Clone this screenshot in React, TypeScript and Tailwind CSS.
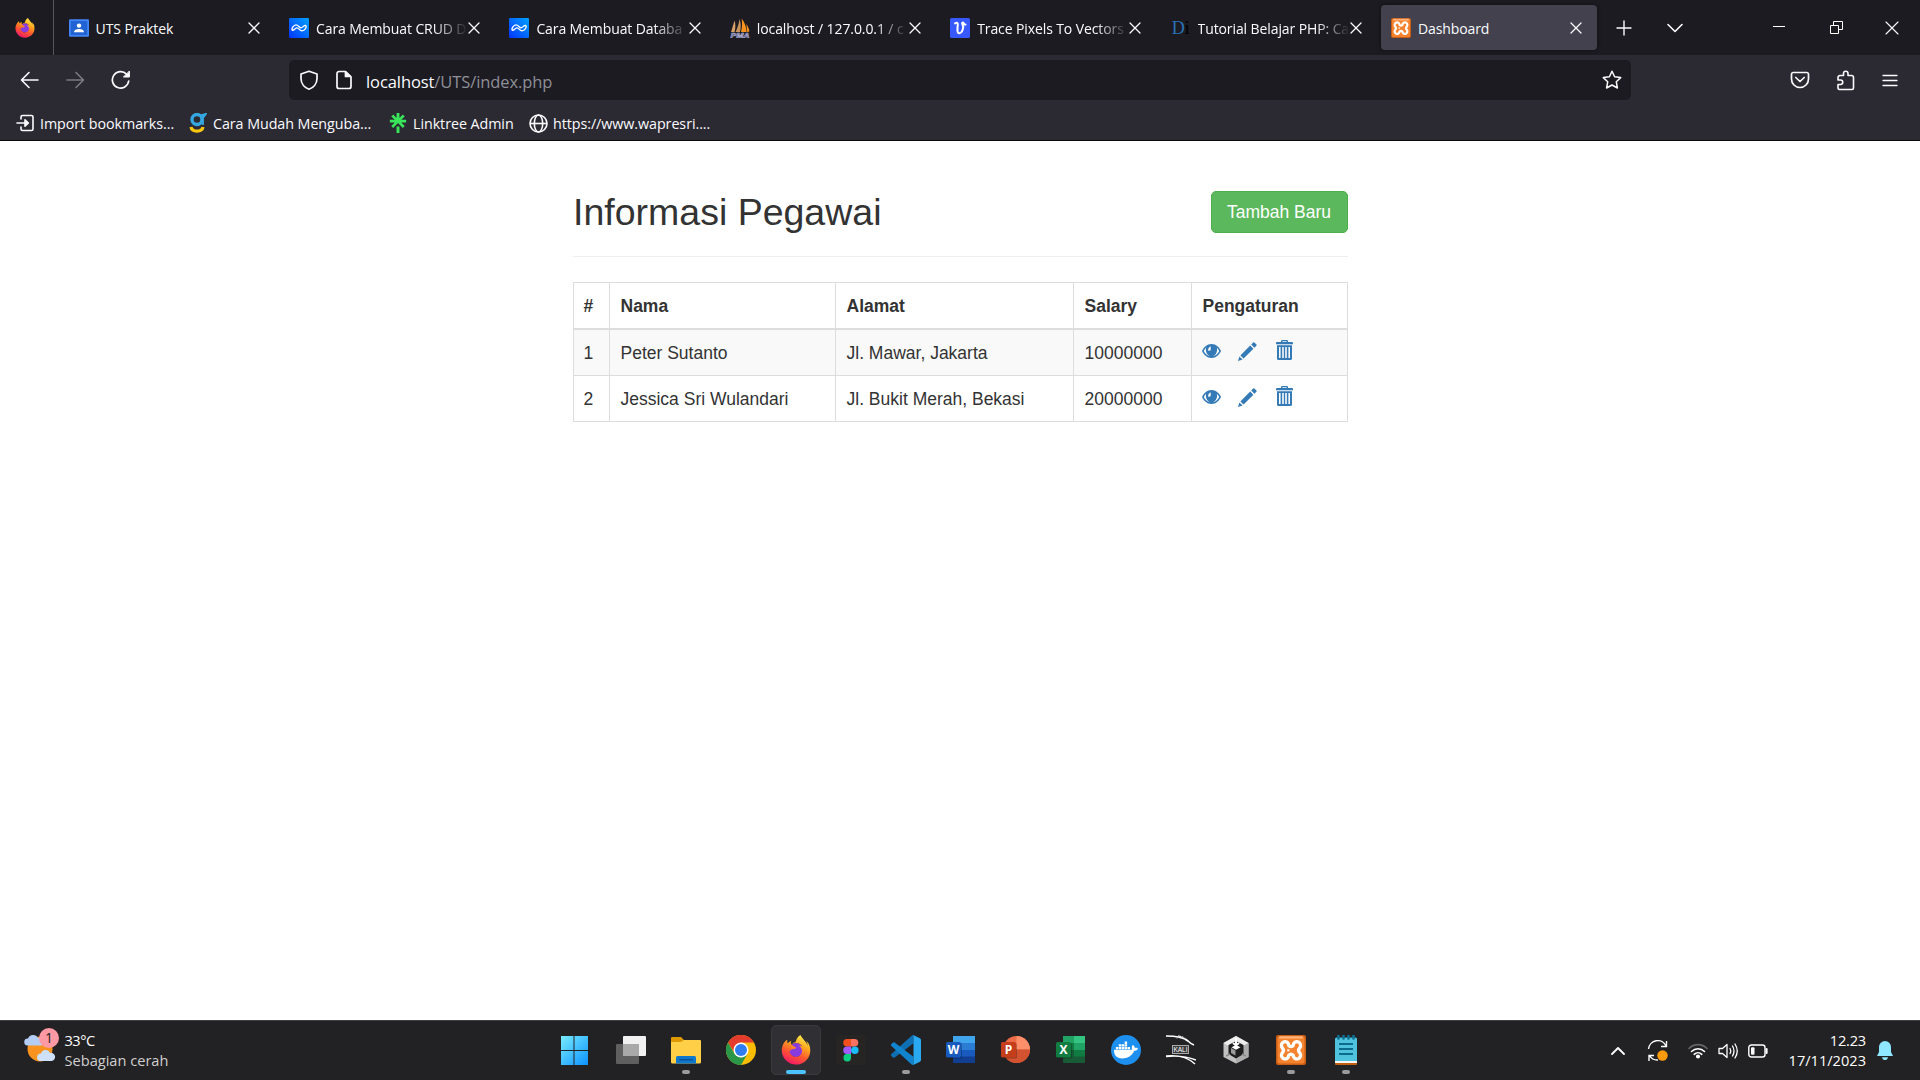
import React from "react";
import { FaDocker, FaFirefoxBrowser } from "react-icons/fa";
import { SiLinktree } from "react-icons/si";

function Firefox({ size, id }: { size: number; id: string }) {
  return (
    <span className="relative block shrink-0" style={{ width: size, height: size }}>
      <svg viewBox="0 0 30 30" className="absolute inset-0 h-full w-full">
        <defs>
          <linearGradient id={id} x1="0.75" y1="0" x2="0.3" y2="1">
            <stop offset="0" stopColor="#fff44f" />
            <stop offset="0.35" stopColor="#ffa51e" />
            <stop offset="0.65" stopColor="#ff5630" />
            <stop offset="1" stopColor="#f5156c" />
          </linearGradient>
        </defs>
        <circle cx="15" cy="15" r="7" fill="#8a3be0" />
      </svg>
      <FaFirefoxBrowser size={size} fill={`url(#${id})`} className="absolute inset-0" />
    </span>
  );
}

function Xampp({ size }: { size: number }) {
  return (
    <span
      className="flex shrink-0 items-center justify-center rounded-[2px] bg-[#c95d14]"
      style={{ width: size, height: size }}
    >
      <svg viewBox="0 0 30 30" width={size} height={size}>
        <rect x="1.5" y="1.5" width="27" height="27" rx="2" fill="#f5822d" />
        <rect x="3" y="1.2" width="24" height="2.4" rx="1" fill="#ffb27a" />
        <path
          d="M12.8 10.500A3.700 3.700 0 1 0 6.300 12.800Q8.800 15.300 6.300 17.800A3.700 3.700 0 1 0 12.800 20.300Q15 18.200 17.200 20.300A3.700 3.700 0 1 0 23.700 17.800Q21.200 15.300 23.700 12.800A3.700 3.700 0 1 0 17.200 10.500Q15 12.600 12.800 10.500Z"
          fill="none"
          stroke="#fff"
          strokeWidth="3.300"
          strokeLinejoin="round"
        />
        <path d="M11.200 15.300H13.500" stroke="#fff" strokeWidth="2" />
      </svg>
    </span>
  );
}

function WaveFav({ id }: { id: string }) {
  return (
    <svg viewBox="0 0 20 20" className="h-5 w-5">
      <defs>
        <linearGradient id={id} x1="1" y1="0" x2="0" y2="1">
          <stop offset="0" stopColor="#00a2ff" />
          <stop offset="1" stopColor="#0434ff" />
        </linearGradient>
      </defs>
      <rect width="20" height="20" rx="1" fill={`url(#${id})`} />
      <path
        d="M3.600 12.400C1.800 11 4.600 6.800 7 6.800C9.400 6.800 10.200 9.800 12 9.800C13.800 9.800 14.400 7.400 16.400 7.400C18.600 8.800 15.600 12.800 13 12.800C10.600 12.800 9.800 9.800 8 9.800C6.200 9.800 5.600 12.400 3.600 12.400Z"
        fill="none"
        stroke="#fff"
        strokeWidth="1.300"
        strokeLinejoin="round"
      />
    </svg>
  );
}

const favs: Record<string, React.ReactNode> = {
  classroom: (
    <svg viewBox="0 0 20 20" className="h-5 w-5">
      <rect y="1.3" width="20" height="17.4" rx="1.2" fill="#4285f4" />
      <rect x="1.8" y="3" width="16.4" height="14" fill="#2263d4" />
      <circle cx="10" cy="7.6" r="2.2" fill="#fff" />
      <path d="M5 14.2C5 11.6 8 10.9 10 10.9S15 11.6 15 14.2Z" fill="#fff" />
    </svg>
  ),
  wave1: <WaveFav id="wave-a" />,
  wave2: <WaveFav id="wave-b" />,
  pma: (
    <svg viewBox="0 0 20 20" className="h-5 w-5">
      <path d="M1 14C2.4 10 3.4 6 4.6 2.6C5.6 6 5.6 10 4.6 14Z" fill="#d9a066" />
      <path d="M5.6 14C7.8 9 9 5 9.6 1C11 5 11.2 10 10 14Z" fill="#c9955c" />
      <path d="M11 14C12.4 9 12.2 4 11.6 .6C14.4 4 16.4 9 16.6 14Z" fill="#f7941d" />
      <path d="M17 14C17 11 16.6 8 16.2 6C18 8.400 19.200 11 19.4 13.400Z" fill="#f7941d" />
      <text x="0.500" y="19.500" fontSize="7" fontWeight="700" fontStyle="italic" textLength="19" lengthAdjust="spacingAndGlyphs" fill="#3d3f7d" stroke="#b9bad8" strokeWidth=".5" fontFamily="Liberation Sans, sans-serif">PMA</text>
    </svg>
  ),
  vector: (
    <svg viewBox="0 0 20 20" className="h-5 w-5">
      <rect width="20" height="20" rx="1.5" fill="#3859ff" />
      <path
        d="M5 5.400C7 4.400 8 4.600 7.800 6.800C7.400 10 6.800 15.200 9.200 15.200C12.400 15.200 14.200 9 12.400 6.400C11.400 4.800 12.800 4 13.600 5C14.200 6 14 7 15.600 6.600"
        fill="none"
        stroke="#fff"
        strokeWidth="2"
        strokeLinecap="round"
      />
    </svg>
  ),
  di: (
    <span className="block w-5 text-center font-['Liberation_Serif',serif] text-[18px] leading-5 text-[#2a72b8]">
      D<span className="text-black">i</span>
    </span>
  ),
  xampp: <Xampp size={20} />,
};

const tabs = [
  { fav: "classroom", title: "UTS Praktek" },
  { fav: "wave1", title: "Cara Membuat CRUD D" },
  { fav: "wave2", title: "Cara Membuat Databa" },
  { fav: "pma", title: "localhost / 127.0.0.1 / c" },
  { fav: "vector", title: "Trace Pixels To Vectors" },
  { fav: "di", title: "Tutorial Belajar PHP: Ca" },
  { fav: "xampp", title: "Dashboard", active: true },
];

function Line({ d, w, h, sw = 1.4, className = "" }: { d: string; w: number; h: number; sw?: number; className?: string }) {
  return (
    <svg width={w} height={h} viewBox={`0 0 ${w} ${h}`} className={`block shrink-0 ${className}`} fill="none" stroke="currentColor" strokeWidth={sw} strokeLinecap="round" strokeLinejoin="round">
      <path d={d} />
    </svg>
  );
}

const X10 = "M1 1L11 11M11 1L1 11";

function TabBar() {
  return (
    <div className="flex h-[55px] bg-[#1c1b22]">
      <div className="flex w-[54px] shrink-0 items-center border-r border-[#57565e] pl-[15px]">
        <Firefox size={20} id="ff-small" />
      </div>
      <div className="flex w-[1546px] shrink-0 pl-[2.6px]">
        {tabs.map((t) => (
          <div key={t.title} className="h-full w-[220.4px] shrink-0 px-[2px] pt-[5px]">
            <div
              className={
                t.active
                  ? "flex h-[45px] items-center rounded-[4px] bg-[#42414d] px-[10px] shadow-[0_0_4px_rgba(0,0,0,0.5)]"
                  : "flex h-[45px] items-center px-[10px]"
              }
            >
              <span className="shrink-0">{favs[t.fav]}</span>
              <span
                className={
                  t.title.length > 12
                    ? "mt-[2px] ml-[7px] w-[150px] shrink-0 whitespace-nowrap [mask-image:linear-gradient(to_right,#000_118px,transparent_152px)]"
                    : "mt-[2px] ml-[7px] w-[150px] shrink-0 whitespace-nowrap"
                }
              >
                {t.title}
              </span>
              <Line d={X10} w={12} h={12} sw={1.3} className="ml-[2.300px]" />
            </div>
          </div>
        ))}
      </div>
      <div className="flex grow items-center">
        <Line d="M8 1V15M1 8H15" w={16} h={16} className="ml-[15.500px]" />
        <Line d="M1 1.500L8 8.500L15 1.500" w={16} h={10} sw={1.6} className="ml-[35px]" />
        <span className="mt-[-2px] ml-[90px] h-px w-3 bg-white" />
        <svg width="13" height="13" className="ml-[45px]" fill="none" stroke="#fff">
          <path d="M.5 4.500H8.500V12.500H.5ZM3.500 4V.5H12.500V8.500H9" />
        </svg>
        <Line d="M1 1L13 13M13 1L1 13" w={14} h={14} sw={1.1} className="ml-[42px]" />
      </div>
    </div>
  );
}

function Toolbar() {
  return (
    <div className="flex h-[51px] items-center bg-[#2b2a33] pb-px">
      <Line d="M18 9H1.500M9 1.500L1.500 9L9 16.500" w={19} h={18} sw={1.6} className="ml-5" />
      <Line d="M1 9H17.500M10 1.500L17.500 9L10 16.500" w={19} h={18} sw={1.6} className="ml-[27px] text-[#7b7a82]" />
      <svg width="20" height="20" viewBox="0 0 20 20" className="ml-[26px]" fill="none" stroke="currentColor" strokeWidth="1.7" strokeLinecap="round">
        <path d="M17.700 11A8.200 8.200 0 1 1 15.500 4.200" />
        <path d="M18.400 1.400V7H12.800Z" fill="currentColor" strokeWidth="1" strokeLinejoin="round" />
      </svg>
      <div className="ml-[158px] flex h-10 w-[1342px] shrink-0 items-center rounded-[5px] bg-[#1c1b22]">
        <Line d="M10 1.200L18 4V8.500C18 13.500 14.500 17.600 10 19.200C5.500 17.600 2 13.500 2 8.500V4Z" w={20} h={20} sw={1.7} className="ml-[10px]" />
        <svg width="18" height="20" viewBox="0 0 18 20" className="ml-[16px]" fill="none" stroke="currentColor" strokeWidth="1.700" strokeLinejoin="round">
          <path d="M4 1.500H10.500L16 7V16.500A2 2 0 0 1 14 18.500H4A2 2 0 0 1 2 16.500V3.500A2 2 0 0 1 4 1.500Z" />
          <path d="M10.500 2V6.500H15.500Z" fill="currentColor" />
        </svg>
        <span className="mt-[4px] ml-[13px] text-[16.500px] tracking-[-0.09px] text-[#fbfbfe]">
          localhost<span className="text-[#8f8f98]">/UTS/index.php</span>
        </span>
        <Line d="M10 1.300L12.600 6.800L18.700 7.600L14.300 11.800L15.400 18L10 15L4.600 18L5.700 11.800L1.300 7.600L7.400 6.800Z" w={20} h={20} sw={1.5} className="mr-[9px] ml-auto" />
      </div>
      <svg width="20" height="18" viewBox="0 0 20 18" className="ml-[159px]" fill="none" stroke="currentColor" strokeWidth="1.700" strokeLinecap="round" strokeLinejoin="round">
        <path d="M3 1.500H17A1.600 1.600 0 0 1 18.500 3V8A8.500 8.500 0 0 1 1.500 8V3A1.600 1.600 0 0 1 3 1.500Z" />
        <path d="M5.800 6.500L10 10.500L14.200 6.500" />
      </svg>
      <Line d="M6.500 5.500V3.500A2.200 2.200 0 0 1 11 3.500V5.500H14.500A2 2 0 0 1 16.500 7.500V18A1.500 1.500 0 0 1 15 19.500H2.500A1.500 1.500 0 0 1 1 18V14.500H3.500A2.200 2.200 0 0 0 3.500 10H1V7.500A2 2 0 0 1 3 5.500Z" w={18} h={21} sw={1.6} className="ml-[27px]" />
      <Line d="M1 1.500H15M1 6.500H15M1 11.500H15" w={16} h={13} sw={1.3} className="ml-[27px]" />
    </div>
  );
}

function Bookmarks() {
  return (
    <div className="flex h-[35px] items-center border-b border-[#0c0c0d] bg-[#2b2a33] text-[14.300px] tracking-[-0.06px]">
      <svg width="18" height="18" viewBox="0 0 18 18" className="ml-4" fill="none" stroke="currentColor" strokeWidth="1.600" strokeLinecap="round" strokeLinejoin="round">
        <path d="M5 5V3A1.500 1.500 0 0 1 6.500 1.500H15.500A1.500 1.500 0 0 1 17 3V15A1.500 1.500 0 0 1 15.500 16.500H6.500A1.500 1.500 0 0 1 5 15V13M1 9H10" />
        <path d="M9 5.800L12.400 9L9 12.200Z" fill="currentColor" />
      </svg>
      <span className="mt-px ml-[6px] w-[149px]">Import bookmarks...</span>
      <svg width="18" height="20" viewBox="0 0 18 20" fill="none">
        <circle cx="8" cy="6.500" r="5" stroke="#35a7e0" strokeWidth="3.400" />
        <path d="M11 2.500L17 .8L15 3.500H14V12" stroke="#35a7e0" strokeWidth="1.800" />
        <path d="M2 14C3 19.500 13 19.500 14 14" stroke="#f9c80e" strokeWidth="3.200" />
      </svg>
      <span className="mt-px ml-[6px] w-[177px]">Cara Mudah Menguba...</span>
      <SiLinktree size={20} color="#39e659" className="-ml-[2px]" />
      <span className="mt-px ml-[5px] w-[116px]">Linktree Admin</span>
      <svg width="19" height="19" viewBox="0 0 19 19" fill="none" stroke="currentColor" strokeWidth="1.600">
        <circle cx="9.500" cy="9.500" r="8.500" />
        <ellipse cx="9.500" cy="9.500" rx="4.200" ry="8.500" />
        <path d="M1 9.500H18" />
      </svg>
      <span className="mt-px ml-[5px]">https://www.wapresri....</span>
    </div>
  );
}

function RowActions() {
  return (
    <span className="flex items-start pt-[10px] text-[#337ab7]">
      <svg width="19" height="14" viewBox="0 0 19 14" className="mt-1">
        <path d="M9.500 0C5 0 1.500 3.500 0 7C1.500 10.500 5 14 9.500 14S17.500 10.500 19 7C17.500 3.500 14 0 9.500 0Z" fill="currentColor" />
        <path d="M4.200 3.400C3.200 4.400 2.300 5.600 1.800 7C2.800 9.200 5 11.600 8 12.200C4.600 10.600 3.200 6.800 4.200 3.400ZM14.800 3.400C15.800 4.400 16.700 5.600 17.200 7C16.200 9.200 14 11.600 11 12.200C14.400 10.600 15.800 6.800 14.800 3.400Z" fill="#fff" />
        <path d="M8.800 2.400C6.600 2.800 5.800 5 6.400 7L8.600 6.200Z" fill="#fff" />
      </svg>
      <svg width="19" height="19" viewBox="0 0 19 19" className="mt-[2px] ml-[17px]" fill="currentColor">
        <path d="M0 19L1.400 14.400L4.600 17.600ZM2.400 13.400L12.200 3.600L15.400 6.800L5.600 16.600ZM13.200 2.600L15.200 .6Q15.800 0 16.400 .6L18.400 2.600Q19 3.200 18.400 3.800L16.400 5.800Z" />
      </svg>
      <svg width="17" height="20" viewBox="0 0 17 20" className="ml-[19px]" fill="currentColor">
        <path fillRule="evenodd" d="M5 2V1.200Q5 0 6.200 0H10.800Q12 0 12 1.200V2H16Q17 2 17 3V4.200H0V3Q0 2 1 2ZM6.400 2H10.600V1.200H6.400ZM1 5.200H16V18.500Q16 20 14.500 20H2.500Q1 20 1 18.500ZM3 7V18H4.600V7ZM6.200 7V18H7.800V7ZM9.200 7V18H10.800V7ZM12.400 7V18H14V7Z" />
      </svg>
    </span>
  );
}

const rows = [
  ["1", "Peter Sutanto", "Jl. Mawar, Jakarta", "10000000"],
  ["2", "Jessica Sri Wulandari", "Jl. Bukit Merah, Bekasi", "20000000"],
];

function Page() {
  return (
    <main className="h-[879px] bg-white font-['Liberation_Sans',Arial,sans-serif] text-[17.5px] text-[#333]">
      <div className="mx-auto flex w-[775px] flex-col pt-[50px]">
        <div className="flex h-[66px] items-start justify-between border-b border-[#eee]">
          <h2 className="pt-px pl-[0.500px] text-[37.5px] leading-[41px]">Informasi Pegawai</h2>
          <button className="h-[42px] w-[137px] rounded-[5px] border border-[#4cae4c] bg-[#5cb85c] whitespace-nowrap text-white">
            Tambah Baru
          </button>
        </div>
        <table className="mt-[25px] w-[775px] table-fixed border-separate border-spacing-0 border-t border-l border-[#ddd]">
          <colgroup>
            <col className="w-[36px]" />
            <col className="w-[226px]" />
            <col className="w-[238px]" />
            <col className="w-[118px]" />
            <col className="w-[156px]" />
          </colgroup>
          <thead>
            <tr className="h-[47px]">
              {["#", "Nama", "Alamat", "Salary", "Pengaturan"].map((h) => (
                <th key={h} className="border-r border-b-2 border-[#ddd] pt-[1px] pl-[11px] text-left font-bold first:pl-[10px]">
                  {h}
                </th>
              ))}
            </tr>
          </thead>
          <tbody>
            {rows.map((r) => (
              <tr key={r[0]} className="h-[46px] odd:bg-[#f9f9f9]">
                {r.map((c) => (
                  <td key={c} className="border-r border-b border-[#ddd] py-0 pt-[2px] pl-[11px] whitespace-nowrap first:pl-[10px]">
                    {c}
                  </td>
                ))}
                <td className="border-r border-b border-[#ddd] py-0 pl-[10px] align-top">
                  <RowActions />
                </td>
              </tr>
            ))}
          </tbody>
        </table>
      </div>
    </main>
  );
}

function Office({ letter, badge, children }: { letter: string; badge: string; children: React.ReactNode }) {
  return (
    <svg viewBox="0 0 30 30" className="h-[30px] w-[30px]">
      {children}
      <rect x="1" y="8" width="15" height="15.500" rx="1.500" fill="#000" opacity=".25" />
      <rect x="0" y="7" width="15" height="15.500" rx="1.500" fill={badge} />
      <text x="7.500" y="19" fontSize="12" fontWeight="700" textAnchor="middle" fill="#fff" fontFamily="Open Sans, sans-serif">
        {letter}
      </text>
    </svg>
  );
}

const S = "h-[30px] w-[30px]";

const apps: { name: string; icon: React.ReactNode; open?: boolean; active?: boolean }[] = [
  {
    name: "start",
    icon: (
      <svg viewBox="0 0 30 30" className={S}>
        <defs>
          <linearGradient id="win" x1="0" y1="1" x2="29" y2="30" gradientUnits="userSpaceOnUse">
            <stop offset="0" stopColor="#7aeeff" />
            <stop offset="1" stopColor="#0a90ff" />
          </linearGradient>
        </defs>
        <path d="M0 1H13.500V15H0ZM14.500 1H28V15H14.500ZM0 16H13.500V30H0ZM14.500 16H28V30H14.500Z" fill="url(#win)" transform="translate(-1 0)" />
      </svg>
    ),
  },
  {
    name: "views",
    icon: (
      <svg viewBox="0 0 30 30" className={S}>
        <rect x="7" y="1" width="23" height="20" rx="1" fill="#f1f1f1" />
        <rect x="0" y="9" width="23" height="20" rx="1" fill="#5f5f5f" />
        <rect x="7" y="9" width="16" height="12" fill="#a9a9a9" />
      </svg>
    ),
  },
  {
    name: "explorer",
    open: true,
    icon: (
      <svg viewBox="0 0 30 30" className={S}>
        <path d="M0 3Q0 2 1 2H10L13 5H20V12H0Z" fill="#dd9a05" />
        <path d="M0 7H10L13 5H29Q30 5 30 6V27Q30 28.500 28.500 28.500H1.500Q0 28.500 0 27Z" fill="#ffcf48" />
        <path d="M5 28.500V22.500Q5 21 6.500 21H23.500Q25 21 25 22.500V28.500Z" fill="#0f78cc" />
        <path d="M8 24.800H22" stroke="#094f8f" strokeWidth="1.300" />
      </svg>
    ),
  },
  {
    name: "chrome",
    icon: (
      <svg viewBox="0 0 30 30" className={S}>
        <circle cx="15" cy="15" r="15" fill="#fbbc04" />
        <path d="M2 7.500A15 15 0 0 1 28 7.500H15L8.500 11.250L8 17Z" fill="#e33b2e" />
        <path d="M2 7.500L8.600 18.900L15 22.500L21.400 18.900L15 30A15 15 0 0 1 2 7.500Z" fill="#2a9748" />
        <circle cx="15" cy="15" r="7.500" fill="#fff" />
        <circle cx="15" cy="15" r="6" fill="#2f7df0" />
      </svg>
    ),
  },
  { name: "firefox", icon: <Firefox size={30} id="ff-large" />, open: true, active: true },
  {
    name: "figma",
    icon: (
      <svg viewBox="0 0 30 30" className={S}>
        <rect width="30" height="30" rx="2" fill="#262524" />
        <path d="M15 4H11A3.750 3.750 0 0 0 11 11.500H15Z" fill="#f24e1e" />
        <path d="M15 4H18.500A3.750 3.750 0 0 1 18.500 11.500H15Z" fill="#ff7262" />
        <path d="M15 11.500H11A3.750 3.750 0 0 0 11 19H15Z" fill="#a259ff" />
        <circle cx="18.800" cy="15.250" r="3.750" fill="#1abcfe" />
        <path d="M15 19H11A3.750 3.750 0 1 0 15 22.700Z" fill="#0acf83" />
      </svg>
    ),
  },
  {
    name: "vscode",
    open: true,
    icon: (
      <svg viewBox="0 0 24 24" className={S}>
        <path d="M.33 15.260A1 1 0 0 0 .33 16.740L1.650 17.940A1 1 0 0 0 2.930 18L18 6.550V.3Q17 0 16.500 .5Z" fill="#0f6fb3" />
        <path d="M.33 8.740A1 1 0 0 1 .33 7.260L1.650 6.060A1 1 0 0 1 2.930 6L18 17.450V23.700Q17 24 16.500 23.500Z" fill="#1283cd" />
        <path d="M17.500 .15L18.210 .21L23.150 2.590A1.500 1.500 0 0 1 24 3.940V20.060A1.500 1.500 0 0 1 23.150 21.410L18.210 23.790L17.500 23.850Q18 23.500 18 22.500V1.500Q18 .5 17.500 .15Z" fill="#29a9f2" />
      </svg>
    ),
  },
  {
    name: "word",
    icon: (
      <Office letter="W" badge="#185abd">
        <rect x="7" y="1" width="22" height="27" rx="1" fill="#103f91" />
        <path d="M7 1H29V8H7Z" fill="#41a5ee" />
        <path d="M7 8H29V15H7Z" fill="#2b7cd3" />
        <path d="M7 15H29V21.500H7Z" fill="#185abd" />
      </Office>
    ),
  },
  {
    name: "powerpoint",
    icon: (
      <Office letter="P" badge="#c43e1c">
        <circle cx="15.500" cy="14.500" r="13.500" fill="#ed6c47" />
        <path d="M15.500 1A13.500 13.500 0 0 1 29 14.500H15.500Z" fill="#ff8f6b" />
        <path d="M29 14.500A13.500 13.500 0 0 1 2 14.500Z" fill="#d35230" />
      </Office>
    ),
  },
  {
    name: "excel",
    icon: (
      <Office letter="X" badge="#107c41">
        <rect x="7" y="1" width="22" height="27" rx="1" fill="#185c37" />
        <path d="M7 1H18V8H7Z" fill="#21a366" />
        <path d="M18 1H29V8H18Z" fill="#33c481" />
        <path d="M7 8H18V15H7Z" fill="#107c41" />
        <path d="M18 8H29V15H18Z" fill="#21a366" />
        <path d="M18 15H29V21.500H18Z" fill="#107c41" />
      </Office>
    ),
  },
  {
    name: "docker",
    icon: (
      <span className="flex h-[30px] w-[30px] items-center justify-center rounded-full bg-[#1d8fee]">
        <FaDocker size={24} color="#fff" />
      </span>
    ),
  },
  {
    name: "kali",
    icon: (
      <svg viewBox="0 0 30 30" className={S} fill="none" stroke="#fff">
        <path d="M0 1Q16 1 22 6Q25 9 28 10M12 1Q20 4 22 6" strokeWidth="1.700" />
        <path d="M11 3.500L14 .5M15 4L17 1M18 4.500L20 3" strokeWidth="1" stroke="#bbb" />
        <path d="M0 21Q18 19 29 29M0 21.500Q18 20 30 25" strokeWidth="1.400" />
        <rect x="6.500" y="10.500" width="16" height="8" strokeWidth="1" stroke="#aaa" fill="#3c3c3e" />
        <text x="14.500" y="17" fontSize="6.500" textAnchor="middle" fill="#fff" stroke="none" fontFamily="Liberation Sans, sans-serif">KALI</text>
      </svg>
    ),
  },
  {
    name: "unity",
    icon: (
      <svg viewBox="0 0 30 30" className={S}>
        <path d="M15 1L27.500 8V22L15 28.500L2.500 22V8Z" fill="#c2c2c2" />
        <path d="M15 1L27.500 8L15 15L2.500 8Z" fill="#ededed" />
        <path d="M15 15L27.500 8V22L15 28.500Z" fill="#acacac" />
        <path d="M15 6L22.500 10V19L15 23.500L7.500 19V10Z" fill="#1d1d1d" />
        <path d="M15 3V9M12 8L15 10.500L18 8" fill="none" stroke="#fff" strokeWidth="2" />
        <path d="M15 10L19.500 12.300L15 14.800L10.500 12.300Z" fill="#fff" />
        <path d="M10 13L14.500 15.500V20.500L10 18Z" fill="#9a9a9a" />
        <path d="M9 19L5 21M21 19L25 21" stroke="#8a8a8a" strokeWidth="1.600" />
      </svg>
    ),
  },
  { name: "xampp", icon: <Xampp size={30} />, open: true },
  {
    name: "notepad",
    open: true,
    icon: (
      <svg viewBox="0 0 30 30" className={S}>
        <path d="M4 26H26V29Q26 30 25 30H5Q4 30 4 29Z" fill="#c25e0f" />
        <path d="M4 25H26V28H4Z" fill="#f4f4f4" />
        <path d="M4 4Q4 2.500 5.500 2.500H24.500Q26 2.500 26 4V26H4Z" fill="#4fc3dd" />
        <path d="M8 9H22M8 14H22M8 19H22" stroke="#0b6b8c" strokeWidth="1.800" />
        <path d="M7.500 .5V3.500M12.500 .5V3.500M17.500 .5V3.500M22.500 .5V3.500" stroke="#0d6f92" strokeWidth="2.600" strokeLinecap="round" />
      </svg>
    ),
  },
];

function Taskbar() {
  return (
    <footer className="flex h-[60px] border-t border-[#3e4041] bg-[#222123] text-white">
      <div className="flex w-[548px] shrink-0 pt-[6px] pl-[24px]">
        <div className="relative h-[36px] w-[36px] shrink-0">
          <svg viewBox="0 0 36 36" className="h-9 w-9">
            <circle cx="16" cy="22" r="12.500" fill="#f7931e" />
            <path d="M3.500 18.500A3.500 3.500 0 0 1 4 11.500A5.500 5.500 0 0 1 14 11A4 4 0 0 1 17 18.500Z" fill="#b4cdf5" />
            <path d="M16 34A3.800 3.800 0 0 1 17 26.500A4.800 4.800 0 0 1 26 26A4 4 0 0 1 28 34Z" fill="#cfe0fb" />
          </svg>
          <span className="absolute top-[0.500px] left-[15px] flex h-5 w-5 items-center justify-center rounded-full bg-[#ff99a4] text-[14px] text-[#222]">
            1
          </span>
        </div>
        <div className="ml-[4.500px] pt-[3px] text-[14.600px] leading-5">
          <div className="tracking-[-0.5px]">33°C</div>
          <div className="text-[#cfcfcf]">Sebagian cerah</div>
        </div>
      </div>
      <div className="flex w-[1070px] shrink-0 pt-[4px]">
        {apps.map((a) => (
          <div key={a.name} className="flex w-[55px] shrink-0 justify-center pr-px pl-[2px]">
            <div
              className={
                a.active
                  ? "flex h-[50px] w-[50px] flex-col items-center rounded-[5px] border border-[#3a393c] bg-[#302f33] pt-[9px]"
                  : "flex h-[50px] w-[50px] flex-col items-center pt-[10px]"
              }
            >
              {a.icon}
              {a.open && (
                <span
                  className={
                    a.active
                      ? "mt-[5px] h-1 w-5 rounded-full bg-[#4cc2ff]"
                      : "mt-[5px] h-1 w-2 rounded-full bg-[#9a9a9a]"
                  }
                />
              )}
            </div>
          </div>
        ))}
      </div>
      <div className="-ml-[7px] flex grow items-center">
        <Line d="M1 8L7 2L13 8" w={14} h={10} sw={1.8} />
        <svg width="22" height="22" viewBox="0 0 22 22" className="ml-[22px]" fill="none" stroke="#fff" strokeWidth="1.400">
          <path d="M1.500 9A9.200 9.200 0 0 1 19 6M19.500 1V6.500H14M7 15.500H2V21M2.500 15.500A9.200 9.200 0 0 0 11 20" />
          <circle cx="15.500" cy="15.500" r="5.200" fill="#ff9a0b" stroke="none" />
        </svg>
        <svg width="20" height="16" viewBox="0 0 20 16" className="ml-[19px]" fill="none" stroke="#fff" strokeWidth="1.600" strokeLinecap="round">
          <path d="M1 5.500A12.500 12.500 0 0 1 19 5.500" stroke="#666" />
          <path d="M3.500 8.500A9 9 0 0 1 16.500 8.500M6.200 11.300A5.500 5.500 0 0 1 13.800 11.300" />
          <circle cx="10" cy="13.500" r="1.300" fill="#fff" />
        </svg>
        <Line d="M1 6.500V11.500H4.500L9 15.500V2.500L4.500 6.500ZM12 6.500Q13.500 9 12 11.500M14.500 4Q17.500 9 14.500 14M17 2Q21.500 9 17 16" w={21} h={18} sw={1.3} className="ml-[10px]" />
        <svg width="20" height="14" viewBox="0 0 20 14" className="ml-[9px]" fill="none" stroke="#fff" strokeWidth="1.400">
          <rect x=".8" y="1" width="16.200" height="12" rx="2.500" />
          <rect x="3" y="3.200" width="3.500" height="7.600" rx="1" fill="#fff" stroke="none" />
          <path d="M18.600 5V9" strokeWidth="2" strokeLinecap="round" />
        </svg>
        <div className="mb-px ml-auto text-right text-[14.600px] leading-5">
          <div className="tracking-[-0.2px]">12.23</div>
          <div>17/11/2023</div>
        </div>
        <svg width="16" height="19" viewBox="0 0 16 19" className="mr-[27px] ml-[11px]" fill="#8ee6ff">
          <path d="M8 0A6 6 0 0 1 14 6V11L16 15H0L2 11V6A6 6 0 0 1 8 0ZM5 16.200H11Q10.500 19 8 19T5 16.200Z" />
        </svg>
      </div>
    </footer>
  );
}

export default function App() {
  return (
    <div className="flex h-[1080px] w-[1920px] flex-col overflow-hidden bg-white font-['Open_Sans','Noto_Sans',sans-serif]">
      <header className="text-[14px] tracking-[-0.1px] text-[#fbfbfe]">
        <TabBar />
        <Toolbar />
        <Bookmarks />
      </header>
      <Page />
      <Taskbar />
    </div>
  );
}
